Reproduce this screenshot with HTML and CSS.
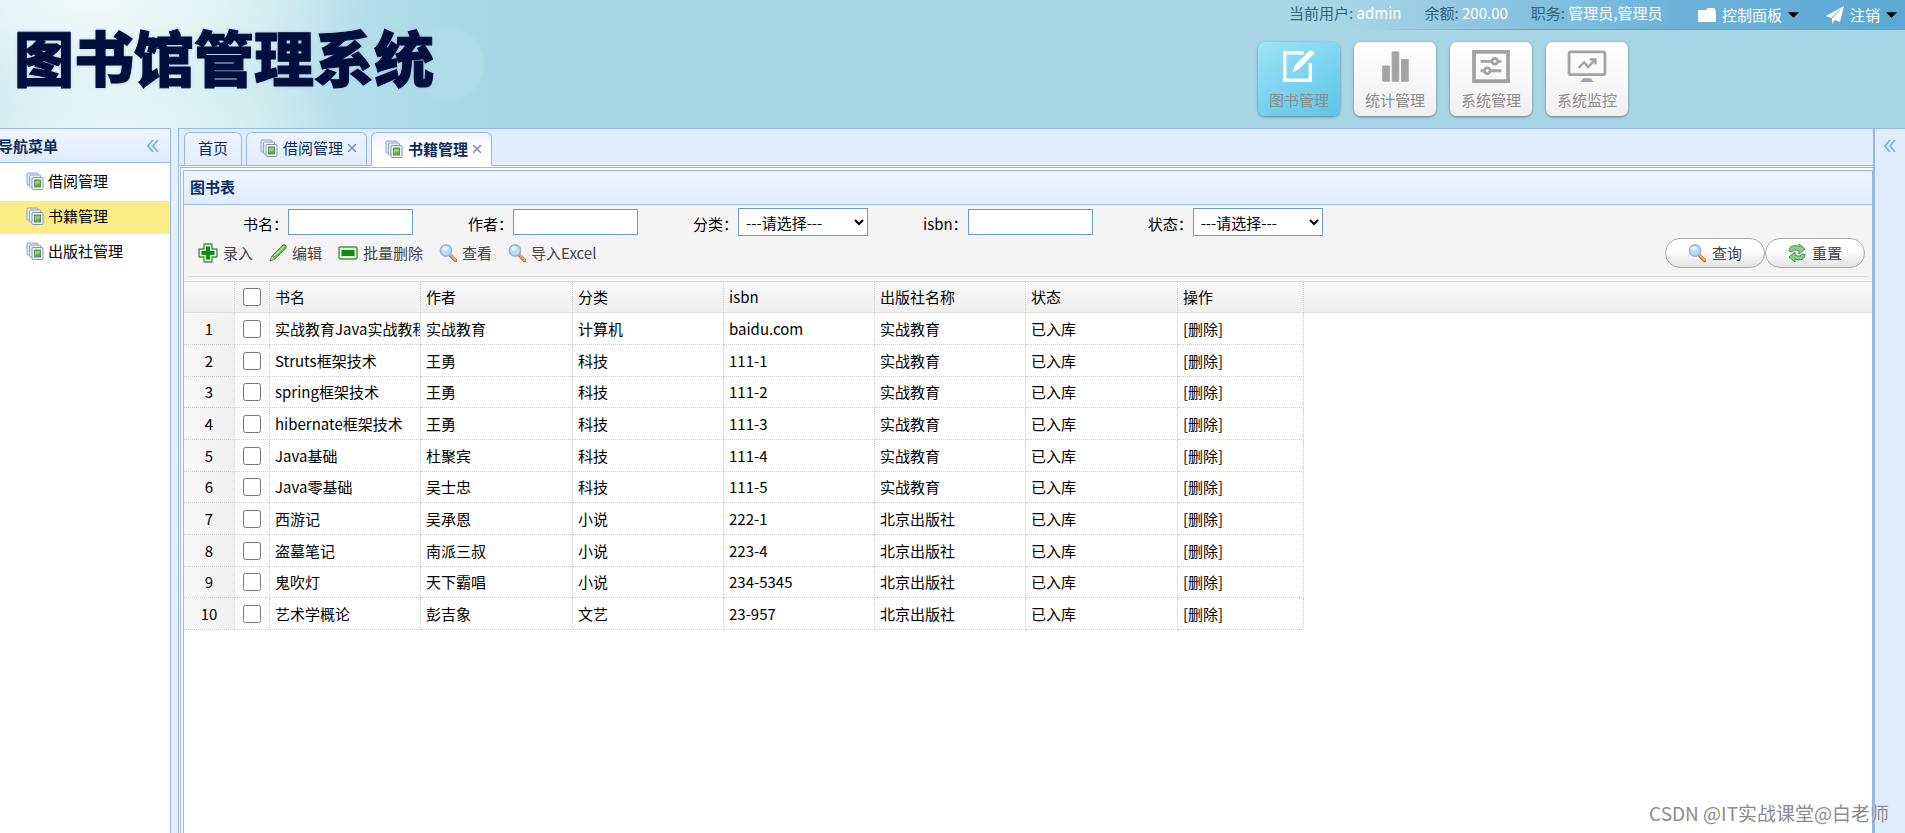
FILE: index.html
```html
<!DOCTYPE html>
<html lang="zh-CN">
<head>
<meta charset="utf-8">
<title>图书馆管理系统</title>
<link rel="stylesheet" href="styles.css">
</head>
<body>
<svg class="sprite" aria-hidden="true">
  <symbol id="i-pages" viewBox="0 0 18 18">
    <rect x="1" y="1" width="11" height="12" rx="1" fill="#dfe8f2" stroke="#8fa8c0"/>
    <rect x="3.5" y="3" width="11" height="12" rx="1" fill="#e6edf5" stroke="#8fa8c0"/>
    <rect x="6" y="5.500" width="11" height="12" rx="1" fill="#f2f6fa" stroke="#7f98b0"/>
    <rect x="8.500" y="8" width="6" height="7" fill="#6fa83e" stroke="#5a8f6a"/>
    <path d="M9 9h5v2l-5 2z" fill="#9fce5e"/>
  </symbol>
  <symbol id="i-add" viewBox="0 0 20 20">
    <path d="M6 1h8v5h5v8h-5v5H6v-5H1V6h5z" fill="#e2f2dd" stroke="#4b9350" stroke-width="1.400" stroke-linejoin="round"/>
    <path d="M8 3.500h4V8h4.500v4H12v4.500H8V12H3.500V8H8z" fill="#0f8a18"/>
  </symbol>
  <symbol id="i-edit" viewBox="0 0 18 18">
    <path d="M1 17l2-5L14 1q2-1 3 1v2L6 15z" fill="#6cc04a" stroke="#3d8a3a"/>
    <path d="M5 12L15 2.500" stroke="#b5e89a" stroke-width="1.500"/>
    <path d="M1 17l2-5 3 3z" fill="#d8d8c0" stroke="#666" stroke-width=".6"/>
  </symbol>
  <symbol id="i-remove" viewBox="0 0 20 20">
    <rect x="1" y="4" width="18" height="12" rx="1" fill="#e2f2dd" stroke="#4b9350" stroke-width="1.400"/>
    <rect x="3.500" y="7" width="13" height="6" fill="#0f8a18"/>
  </symbol>
  <symbol id="i-search" viewBox="0 0 18 18">
    <path d="M11.500 11.500l5 5" stroke="#b9702c" stroke-width="3.400" stroke-linecap="round"/>
    <path d="M12 11.500l4.500 4.500" stroke="#f2a95c" stroke-width="2" stroke-linecap="round"/>
    <circle cx="7" cy="6.500" r="5.600" fill="#b7dcfa" stroke="#9db4d6" stroke-width="1.600"/>
    <ellipse cx="5.800" cy="4.600" rx="3" ry="2" fill="#e6f4ff"/>
  </symbol>
  <symbol id="i-reload" viewBox="0 0 18 20">
    <path d="M1 8c0-5 5-6.500 10-4.500V1l6 5-6 5V8C8 6.500 5 6.500 4 9z" fill="#86cf86" stroke="#3f8f4b" stroke-linejoin="round"/>
    <path d="M17 11.500c0 5-5 6.500-10 4.500v3l-6-5 6-5v3c3 1.500 6 1.500 7-1z" fill="#86cf86" stroke="#3f8f4b" stroke-linejoin="round"/>
  </symbol>
  <symbol id="i-collapse" viewBox="0 0 12 12">
    <path d="M6 0L1 6l5 6M11 0L6 6l5 6" fill="none" stroke="#74b5ef" stroke-width="1.800"/>
  </symbol>
  <symbol id="i-caret" viewBox="0 0 12 6"><path d="M0 0h12L6 6z" fill="#000"/></symbol>
</svg>

<header class="banner">
  <h1 class="logo">图书馆管理系统</h1>
  <div class="session">
    <span class="info">当前用户: <b>admin</b></span>
    <span class="info">余额: <b>200.00</b></span>
    <span class="info">职务: <b>管理员,管理员</b></span>
    <div class="menus">
      <button class="menu" type="button">
        <svg width="18" height="14" viewBox="0 0 18 14"><path d="M0 3q0-1 1-1h7l2-2h6q1 0 1 2 1 0 1 1v10q0 1-1 1H1q-1 0-1-1z" fill="#fff"/></svg>
        控制面板 <svg class="caret"><use href="#i-caret"/></svg>
      </button>
      <button class="menu" type="button">
        <svg width="18" height="18" viewBox="0 0 18 18"><path d="M18 0L0 10l5 2zM18 0L6 12.500V18l3-4 5 2z" fill="#fff"/></svg>
        注销 <svg class="caret"><use href="#i-caret"/></svg>
      </button>
    </div>
  </div>
  <nav class="modules">
    <button class="module active" type="button">
      <svg viewBox="0 0 36 36"><path d="M23 3H3v29h27V14" fill="none" stroke="#fff" stroke-width="3.500"/><path d="M11 24l3-8L30 0l5 3-17 17z" fill="#fff"/></svg>图书管理</button>
    <button class="module" type="button">
      <svg viewBox="0 0 36 36"><path d="M5 17h7v16H5zM15 2h7v31h-7zM25 10h7v23h-7z" fill="#a3a3a3" stroke="#a3a3a3" stroke-linejoin="round"/></svg>统计管理</button>
    <button class="module" type="button">
      <svg viewBox="0 0 36 36"><g fill="none" stroke="#a3a3a3" stroke-width="3"><rect x="0" y="2" width="36" height="31" stroke-width="4"/><path d="M7 12h12M26 12h3M7 22h4M18 22h11"/><circle cx="22" cy="12" r="3"/><circle cx="14" cy="22" r="3"/></g></svg>系统管理</button>
    <button class="module" type="button">
      <svg viewBox="0 0 36 36"><g fill="none" stroke="#a3a3a3" stroke-width="3"><rect x="-1" y="2" width="38" height="24" rx="2"/><path d="M9 19l6-6 4 5 7-7M21 10h6v5" stroke-width="2.500"/></g><path d="M14 30h8l3 4H11z" fill="#a3a3a3"/></svg>系统监控</button>
  </nav>
</header>

<div class="workspace">
  <aside class="west">
    <div class="west-head"><span>导航菜单</span><button class="collapse" type="button" aria-label="折叠"><svg><use href="#i-collapse"/></svg></button></div>
    <ul class="tree">
      <li><a href="#"><svg><use href="#i-pages"/></svg>借阅管理</a></li>
      <li><a href="#" class="selected"><svg><use href="#i-pages"/></svg>书籍管理</a></li>
      <li><a href="#"><svg><use href="#i-pages"/></svg>出版社管理</a></li>
    </ul>
  </aside>

  <main class="center">
    <div class="tabs">
      <button class="tab" type="button">首页</button>
      <button class="tab with-icon" type="button"><svg class="tab-icon"><use href="#i-pages"/></svg>借阅管理<svg class="close" viewBox="0 0 8 8"><path d="M0 0l8 8M8 0L0 8"/></svg></button>
      <button class="tab with-icon current" type="button"><svg class="tab-icon"><use href="#i-pages"/></svg>书籍管理<svg class="close" viewBox="0 0 8 8"><path d="M0 0l8 8M8 0L0 8"/></svg></button>
    </div>
    <div class="tab-body">
      <section class="panel">
        <h2 class="panel-title">图书表</h2>
        <form class="toolbar">
          <div class="fields">
            <div class="field"><label for="f-name">书名：</label><input id="f-name" type="text"></div>
            <div class="field"><label for="f-author">作者：</label><input id="f-author" type="text"></div>
            <div class="field"><label for="f-type">分类：</label><select id="f-type"><option>---请选择---</option></select></div>
            <div class="field"><label for="f-isbn">isbn：</label><input id="f-isbn" type="text"></div>
            <div class="field"><label for="f-state">状态：</label><select id="f-state"><option>---请选择---</option></select></div>
          </div>
          <div class="actions">
            <button class="tool" type="button"><svg><use href="#i-add"/></svg>录入</button>
            <button class="tool" type="button"><svg class="small"><use href="#i-edit"/></svg>编辑</button>
            <button class="tool" type="button"><svg><use href="#i-remove"/></svg>批量删除</button>
            <button class="tool" type="button"><svg class="small"><use href="#i-search"/></svg>查看</button>
            <button class="tool" type="button"><svg class="small"><use href="#i-search"/></svg>导入Excel</button>
            <div class="submit">
              <button class="pill" type="button"><svg><use href="#i-search"/></svg>查询</button>
              <button class="pill" type="button"><svg><use href="#i-reload"/></svg>重置</button>
            </div>
          </div>
        </form>
        <div class="grid">
          <table>
            <colgroup><col class="c-num"><col class="c-check"><col class="c-text"><col class="c-wide"><col class="c-text"><col class="c-text"><col class="c-text"><col class="c-wide"><col class="c-op"><col></colgroup>
            <thead>
              <tr><th></th><th><input type="checkbox" aria-label="全选"></th><th>书名</th><th>作者</th><th>分类</th><th>isbn</th><th>出版社名称</th><th>状态</th><th>操作</th><th></th></tr>
            </thead>
            <tbody>
              <tr><td>1</td><td><input type="checkbox" aria-label="选择第1行"></td><td>实战教育Java实战教程</td><td>实战教育</td><td>计算机</td><td>baidu.com</td><td>实战教育</td><td>已入库</td><td><a href="#">[删除]</a></td></tr>
              <tr><td>2</td><td><input type="checkbox" aria-label="选择第2行"></td><td>Struts框架技术</td><td>王勇</td><td>科技</td><td>111-1</td><td>实战教育</td><td>已入库</td><td><a href="#">[删除]</a></td></tr>
              <tr><td>3</td><td><input type="checkbox" aria-label="选择第3行"></td><td>spring框架技术</td><td>王勇</td><td>科技</td><td>111-2</td><td>实战教育</td><td>已入库</td><td><a href="#">[删除]</a></td></tr>
              <tr><td>4</td><td><input type="checkbox" aria-label="选择第4行"></td><td>hibernate框架技术</td><td>王勇</td><td>科技</td><td>111-3</td><td>实战教育</td><td>已入库</td><td><a href="#">[删除]</a></td></tr>
              <tr><td>5</td><td><input type="checkbox" aria-label="选择第5行"></td><td>Java基础</td><td>杜聚宾</td><td>科技</td><td>111-4</td><td>实战教育</td><td>已入库</td><td><a href="#">[删除]</a></td></tr>
              <tr><td>6</td><td><input type="checkbox" aria-label="选择第6行"></td><td>Java零基础</td><td>吴士忠</td><td>科技</td><td>111-5</td><td>实战教育</td><td>已入库</td><td><a href="#">[删除]</a></td></tr>
              <tr><td>7</td><td><input type="checkbox" aria-label="选择第7行"></td><td>西游记</td><td>吴承恩</td><td>小说</td><td>222-1</td><td>北京出版社</td><td>已入库</td><td><a href="#">[删除]</a></td></tr>
              <tr><td>8</td><td><input type="checkbox" aria-label="选择第8行"></td><td>盗墓笔记</td><td>南派三叔</td><td>小说</td><td>223-4</td><td>北京出版社</td><td>已入库</td><td><a href="#">[删除]</a></td></tr>
              <tr><td>9</td><td><input type="checkbox" aria-label="选择第9行"></td><td>鬼吹灯</td><td>天下霸唱</td><td>小说</td><td>234-5345</td><td>北京出版社</td><td>已入库</td><td><a href="#">[删除]</a></td></tr>
              <tr><td>10</td><td><input type="checkbox" aria-label="选择第10行"></td><td>艺术学概论</td><td>彭吉象</td><td>文艺</td><td>23-957</td><td>北京出版社</td><td>已入库</td><td><a href="#">[删除]</a></td></tr>
            </tbody>
          </table>
        </div>
      </section>
    </div>
  </main>

  <aside class="east"><button class="collapse" type="button" aria-label="展开"><svg><use href="#i-collapse"/></svg></button></aside>
</div>
<div class="watermark">CSDN @IT实战课堂@白老师</div>
</body>
</html>
```
FILE: styles.css
```css
* { box-sizing: border-box; }
body {
  margin: 0;
  height: 100vh;
  display: flex;
  flex-direction: column;
  overflow: hidden;
  font: 15px/20px "Noto Sans CJK SC", "Noto Sans", sans-serif;
  color: #000;
  background: #fff;
}
button {
  font: inherit;
  color: inherit;
  background: none;
  border: 0;
  padding: 0;
  display: flex;
  align-items: center;
}
a { color: inherit; text-decoration: none; }
.sprite { position: absolute; width: 0; height: 0; }

/* banner */
.banner {
  height: 128px;
  flex: none;
  display: grid;
  grid-template-columns: 1fr 647px;
  grid-template-rows: 30px 1fr;
  background:
    radial-gradient(circle at 448px 64px, #b0dbe8 0 34px, transparent 38px),
    radial-gradient(ellipse 220px 90px at 120px 128px, #e6f5f6 0, transparent),
    radial-gradient(ellipse 280px 110px at 90px 0, #f0faf9 0, transparent),
    linear-gradient(90deg, #cde8f1 0, #d9f0f3 110px, #c9e8ee 250px, #b4deea 350px, #a8d6e7 500px);
}
.logo {
  grid-row: 1 / 3;
  margin: 0;
  padding: 16px 0 0 14px;
  font: 900 60px/80px "Noto Sans CJK SC", sans-serif;
  color: #020f3c;
  -webkit-text-stroke: 1px #020f3c;
  text-shadow: 0 0 3px #8ea9cc;
}
.session {
  display: flex;
  align-items: center;
  gap: 23px;
  padding: 0 8px 4px 31px;
  color: #33647c;
  white-space: nowrap;
  background:
    linear-gradient(90deg, transparent 120px, #56a5d1 260px) bottom / 100% 1px no-repeat,
    linear-gradient(90deg, transparent 80px, #6cb2d8 420px, #5ca8d2);
}
.info b { font-weight: 400; color: #fff; }
.menus { display: flex; gap: 27px; margin-left: auto; }
.menu { gap: 6px; color: #fff; padding-top: 3px; }
.caret { width: 11px; height: 6px; }
.modules { display: flex; gap: 14px; padding: 12px 0 0; }
.module {
  width: 82px;
  height: 74px;
  flex-direction: column;
  gap: 6px;
  padding-top: 8px;
  border-radius: 7px;
  color: #8c8c8c;
  background: linear-gradient(#fff, #f0f0f0);
  box-shadow: 0 1px 3px #607f8c;
}
.module svg { width: 34px; height: 34px; overflow: visible; }
.module.active { background: linear-gradient(150deg, #9fe3f3, #7dd3ee 50%, #5ac4ea); }

/* workspace */
.workspace { flex: 1; min-height: 0; display: flex; background: #e6eefb; }
.west { width: 171px; border: 1px solid #95b8e7; border-width: 1px 1px 0 0; background: #fff; }
.west-head {
  height: 34px;
  display: flex;
  align-items: center;
  justify-content: space-between;
  padding-right: 11px;
  border-bottom: 1px solid #95b8e7;
  background: linear-gradient(#eff5ff, #e0ecff);
  color: #0e2d5f;
  font-weight: 700;
}
.west-head span { margin-left: -2px; }
.collapse svg { width: 12px; height: 12px; }
.tree { list-style: none; margin: 0; padding: 3px 0 0; }
.tree a { display: flex; align-items: center; gap: 4px; height: 33px; margin-bottom: 2px; padding: 0 0 4px 26px; }
.tree svg { width: 18px; height: 18px; }
.tree .selected { background: #fbec88; }

.center { flex: 1; min-width: 0; margin-left: 7px; display: flex; flex-direction: column; border: 1px solid #95b8e7; border-width: 1px 2px 0 1px; background: #fff; }
.tabs { height: 37px; flex: none; display: flex; align-items: flex-end; gap: 4px; padding: 0 5px; background: #e0ecff; border-bottom: 1px solid #95b8e7; }
.tab {
  height: 33px;
  padding: 0 13px 2px;
  color: #0e2d5f;
  border: 1px solid #95b8e7;
  border-bottom: 0;
  border-radius: 6px 6px 0 0;
  background: linear-gradient(#eff5ff, #e0ecff);
}
.with-icon { width: 121px; padding: 0 8px 2px 13px; gap: 5px; }
.tab-icon { width: 18px; height: 18px; }
.close { width: 8px; height: 8px; stroke: #7590b8; stroke-width: 1.5; fill: none; }
.current { height: 34px; margin-bottom: -1px; font-weight: 700; background: linear-gradient(#eff5ff, #fff 60%); }
.tab-body { flex: 1; min-height: 0; display: flex; margin: 1px 0 0 1px; padding: 2px 0 0 2px; border: 1px solid #95b8e7; border-width: 1px 0 0 1px; }
.panel { flex: 1; min-width: 0; border: 1px solid #95b8e7; border-bottom: 0; }
.panel-title { margin: 0; height: 34px; padding: 6px; font-size: 15px; line-height: 20px; color: #0e2d5f; border-bottom: 1px solid #95b8e7; background: linear-gradient(#eff5ff, #e0ecff); }

/* toolbar */
.toolbar { padding: 3px 4px 4px; height: 76px; background: #f4f4f4; }
.fields { display: flex; gap: 55px; height: 28px; padding-left: 55px; align-items: center; }
.field { display: flex; align-items: center; white-space: nowrap; }
.field label { padding-top: 3px; }
.field input, .field select { font: inherit; border: 1px solid #6b9cbb; background: #fff; color: #000; }
.field input { width: 125px; height: 26px; padding: 2px 4px; }
.field select { width: 130px; height: 28px; border-radius: 0; padding: 0 3px; }
.actions { display: flex; align-items: center; gap: 16px; height: 41px; padding: 0 3px 7px 10px; border-bottom: 1px solid #ddd; }
.tool { gap: 5px; color: #444; }
.tool svg { width: 20px; height: 20px; }
.tool svg.small { width: 18px; height: 18px; }
.submit { display: flex; margin-left: auto; }
.pill {
  width: 100px;
  height: 30px;
  justify-content: center;
  gap: 6px;
  color: #444;
  border: 1px solid #a8a8a8;
  border-radius: 15px;
  background: linear-gradient(#fff 40%, #e2e2e2);
}
.pill svg { width: 18px; height: 20px; }

/* grid */
.grid { border-top: 1px solid #ddd; }
table { width: 100%; table-layout: fixed; border-collapse: separate; border-spacing: 0; }
.c-num { width: 51px; }
.c-check { width: 35px; }
.c-text { width: 151px; }
.c-wide { width: 152px; }
.c-op { width: 126px; }
th, td { height: 32px; padding: 0 5px; font-weight: 400; text-align: left; white-space: nowrap; overflow: hidden; border: 0 dotted #ccc; border-width: 0 1px 1px 0; }
tr:nth-child(3n) td { height: 31px; }
th { height: 31px; border-bottom: 1px solid #ddd; }
th:last-child { border-right: 0; }
thead tr { background: linear-gradient(#f9f9f9, #efefef); }
td:first-child { text-align: center; background: linear-gradient(90deg, #f8f8f8, #f1f1f1); }
th:nth-child(2), td:nth-child(2) { padding: 0; text-align: center; }
td:nth-child(3) { padding-right: 0; }
th input, td input { display: block; width: 18px; height: 18px; margin: 0 auto; }

.east { width: 30px; padding: 11px 0 0 9px; background: #e0ecff; border-top: 1px solid #95b8e7; }

.watermark {
  position: absolute;
  right: 16px;
  bottom: 6px;
  font: 19px/28px "Noto Sans CJK SC", sans-serif;
  color: #8c8c8c;
  text-shadow: 0 0 1px #fff;
}
```
